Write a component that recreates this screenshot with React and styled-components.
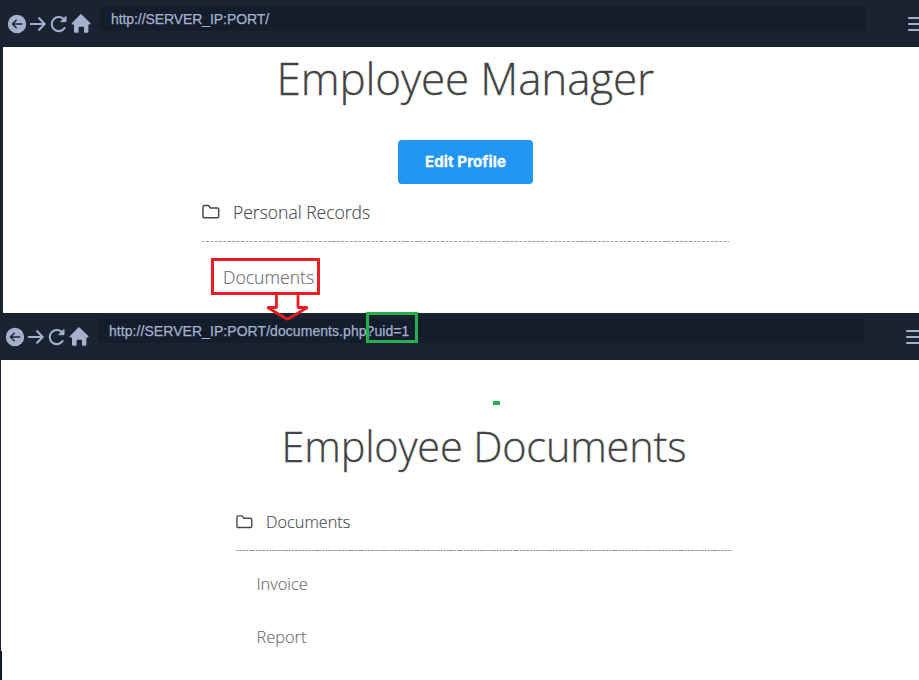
import React from "react";
import styled, { createGlobalStyle } from "styled-components";

const GlobalStyle = createGlobalStyle`
  * { box-sizing: border-box; }
  html, body { margin: 0; background: #fff; overflow: hidden; }
`;

const Page = styled.div`
  position: relative;
  width: 919px;
  height: 680px;
  overflow: hidden;
  background: #fff;
  font-family: "Open Sans", sans-serif;
  font-weight: 300;
`;

const Browser = styled.section`
  height: ${(p) => p.$height}px;
  overflow: hidden;
`;

const Toolbar = styled.header`
  display: flex;
  align-items: flex-start;
  height: 47px;
  padding: 6px 0 0 ${(p) => p.$indent}px;
  background: #1a2332;
`;

const NavIcons = styled.nav`
  display: flex;
  flex: none;
  width: 94px;
  height: 20px;
  margin-top: 8px;
  svg { display: block; }
`;

const Address = styled.div`
  flex: none;
  width: 766px;
  height: ${(p) => p.$height}px;
  padding-left: 11px;
  border-radius: 5px;
  background: #141d2b;
  color: #a4b1cd;
  font: 400 14px/${(p) => p.$line}px "Liberation Sans", sans-serif;
  letter-spacing: ${(p) => p.$spacing}px;
  -webkit-text-stroke: 0.25px #a4b1cd;
  white-space: nowrap;
`;

const MenuButton = styled.div`
  display: flex;
  flex: none;
  flex-direction: column;
  gap: 4px;
  width: 18px;
  margin: 11px 0 0 42px;
`;

const MenuLine = styled.span`
  height: 2px;
  border-radius: 1px;
  background: #a4b1cd;
`;

const Content = styled.main`
  display: flex;
  flex-direction: column;
  height: ${(p) => p.$height}px;
  border-left: ${(p) => p.$edge}px solid #1a2332;
  padding-left: ${(p) => p.$indent}px;
`;

const Title = styled.h1`
  margin: ${(p) => p.$margin};
  color: #444;
  font-size: ${(p) => p.$size}px;
  line-height: 60px;
  font-weight: 300;
  letter-spacing: -0.14px;
  -webkit-text-stroke: 0.3px #444;
  white-space: nowrap;
`;

const EditButton = styled.button`
  flex: none;
  width: 135px;
  height: 44px;
  margin: 32px 0 0 196px;
  padding: 0;
  border: 0;
  border-radius: 4px;
  background: #2196f3;
  color: #fff;
  font: 700 15px/44px Inter, sans-serif;
  letter-spacing: 0.12px;
  -webkit-text-stroke: 0.3px #fff;
`;

const Folder = styled.div`
  display: flex;
  align-items: center;
  height: 28px;
  margin: ${(p) => p.$margin};
  color: #484852;
  font-size: ${(p) => p.$size}px;
  -webkit-text-stroke: 0.15px #484852;
  svg { flex: none; margin-right: 13px; }
`;

const Divider = styled.div`
  flex: none;
  width: ${(p) => p.$width}px;
  height: 1px;
  background: repeating-linear-gradient(90deg, #999 0 2.4px, #e6e6e6 2.4px ${(p) => p.$step}px);
`;

const FileLink = styled.div`
  height: 24px;
  margin: ${(p) => p.$margin};
  color: #6c6c73;
  font-size: ${(p) => p.$size}px;
  line-height: 24px;
  -webkit-text-stroke: 0.15px #6c6c73;
`;

const EdgeMark = styled.i`
  position: absolute;
  left: 0;
  top: 651px;
  width: 2px;
  height: 29px;
  background: #111b2a;
`;

const Highlight = styled.div`
  position: absolute;
  left: ${(p) => p.$x}px;
  top: ${(p) => p.$y}px;
  width: ${(p) => p.$w}px;
  height: ${(p) => p.$h}px;
  border: 3px solid ${(p) => p.$color};
`;

const GreenDash = styled.i`
  position: absolute;
  left: 493px;
  top: 401px;
  width: 7px;
  height: 4px;
  background: #22b14c;
`;

const ArrowMark = styled.svg`
  position: absolute;
  left: 264px;
  top: 293px;
`;

function NavigationIcons() {
  return (
    <NavIcons>
      <svg width="86" height="20" viewBox="0 0 86 20" fill="none" stroke="#a4b1cd" strokeWidth="2.1" strokeLinecap="round" strokeLinejoin="round">
        <circle cx="11" cy="10" r="9.2" fill="#a4b1cd" stroke="none" />
        <path d="M15.7 10H7M10.2 6.3 6.5 10l3.7 3.7" stroke="#1a2332" strokeWidth="1.5" />
        <path d="M24.8 10H38.4M33.1 4.2 38.7 10l-5.6 5.8" />
        <path d="M58.6 14.2A7.1 7.1 0 1 1 58.3 5.5" />
        <path d="M60 2.7V7.7H55z" fill="#a4b1cd" strokeWidth="1" />
        <path d="M74 .7c.6-.5 1.2-.5 1.8 0l8.3 8.1c.8.9.4 1.7-.7 1.7h-1v7.1q0 1.2-1.2 1.2H78v-5q0-1-1-1h-3.4q-1 0-1 1v5h-3.4q-1.2 0-1.2-1.2v-7.1h-1.5c-1 0-1.3-.8-.5-1.6z" fill="#a4b1cd" stroke="none" />
      </svg>
    </NavIcons>
  );
}

function BrowserToolbar({ url, indent, height, line, spacing }) {
  return (
    <Toolbar $indent={indent}>
      <NavigationIcons />
      <Address $height={height} $line={line} $spacing={spacing}>{url}</Address>
      <MenuButton><MenuLine /><MenuLine /><MenuLine /></MenuButton>
    </Toolbar>
  );
}

function FolderIcon({ size }) {
  return (
    <svg width={size} height="16" viewBox="0 0 18 16" fill="none" stroke="#484854" strokeWidth="1.5" strokeLinejoin="round">
      <path d="M1 3Q1 1.5 2.5 1.5h4L8.4 4H15.3q1.4 0 1.4 1.4v7q0 1.4-1.4 1.4h-13Q1 13.8 1 12.4z" />
    </svg>
  );
}

export default function App() {
  return (
    <Page>
      <GlobalStyle />
      <Browser $height={313}>
        <BrowserToolbar url="http://SERVER_IP:PORT/" indent={6} height={25} line={26} spacing={-0.08} />
        <Content $edge={3} $indent={199} $height={266}>
          <Title $size={44} $margin="1px 0 0 74.5px">Employee Manager</Title>
          <EditButton>Edit Profile</EditButton>
          <Folder $margin="14px 0 15px" $size={17.5}>
            <FolderIcon size={18} />Personal Records
          </Folder>
          <Divider $width={527} $step={4.35} />
          <FileLink $size={17.6} $margin="23px 0 0 21px">Documents</FileLink>
        </Content>
      </Browser>
      <Browser $height={367}>
        <BrowserToolbar url="http://SERVER_IP:PORT/documents.php?uid=1" indent={4} height={24} line={24} spacing={0.06} />
        <Content $edge={1} $indent={235} $height={320}>
          <Title $size={41.4} $margin="56px 0 0 45.5px">Employee Documents</Title>
          <Folder $margin="32px 0 14px" $size={16.3}>
            <FolderIcon size={17} />Documents
          </Folder>
          <Divider $width={496} $step={3.3} />
          <FileLink $size={16.4} $margin="21px 0 0 20.4px">Invoice</FileLink>
          <FileLink $size={16.4} $margin="29px 0 0 20.4px">Report</FileLink>
        </Content>
      </Browser>
      <EdgeMark />
      <Highlight $x={211} $y={258} $w={109} $h={37} $color="#ed1c24" />
      <ArrowMark width="48" height="30" viewBox="0 0 48 30" fill="none" stroke="#ed1c24" strokeWidth="2.8">
        <path d="M12.5 0V14.5H3.5L23.5 26.3 43.5 14.5H34V0" strokeLinejoin="bevel" />
      </ArrowMark>
      <Highlight $x={366} $y={312} $w={52} $h={31} $color="#22b14c" />
      <GreenDash />
    </Page>
  );
}
